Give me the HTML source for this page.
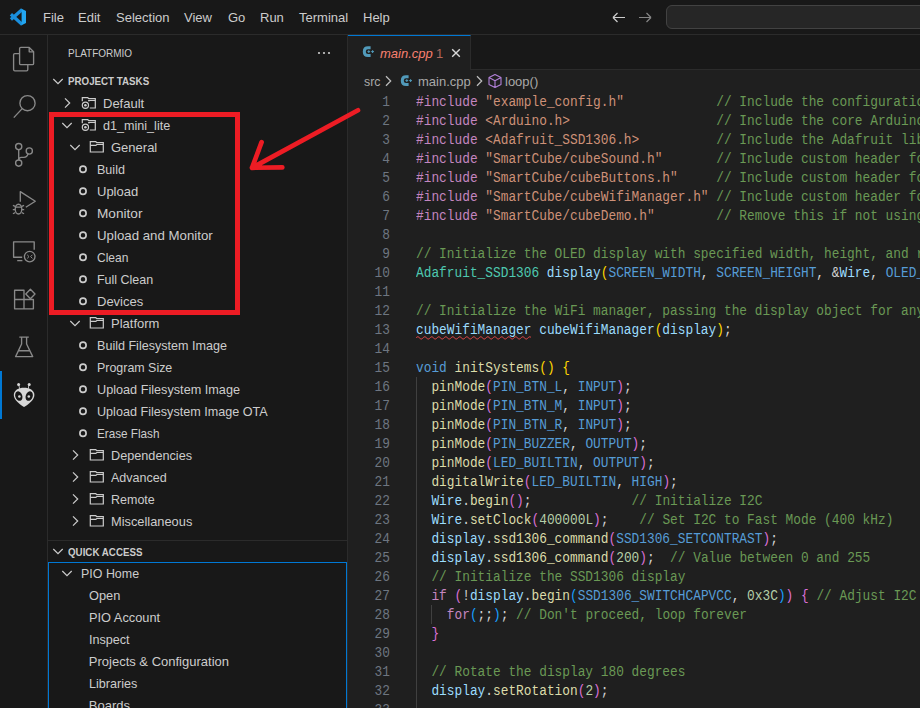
<!DOCTYPE html>
<html><head><meta charset="utf-8">
<style>
*{margin:0;padding:0;box-sizing:border-box}
html,body{width:920px;height:708px;overflow:hidden;background:#181818}
body{position:relative;font-family:"Liberation Sans",sans-serif;color:#CCCCCC}
.a{position:absolute}
.t{position:absolute;transform-origin:0 0;white-space:pre;font-size:13px;line-height:22px;height:22px;margin-top:1px}
#title{left:0;top:0;width:920px;height:35px;background:#181818;border-bottom:1px solid #2B2B2B}
.menu{position:absolute;top:0;line-height:35px;font-size:13px;color:#CCCCCC;white-space:pre}
#act{left:0;top:35px;width:48px;height:673px;background:#181818;border-right:1px solid #2B2B2B}
#side{left:48px;top:35px;width:300px;height:673px;background:#181818;border-right:1px solid #2B2B2B}
#editor{left:348px;top:35px;width:572px;height:673px;background:#1F1F1F}
#tabs{left:348px;top:35px;width:572px;height:35px;background:#181818;border-bottom:1px solid #2B2B2B}
#tab{left:348px;top:35px;width:123px;height:35px;background:#1F1F1F;border-top:1px solid #0078D4;border-right:1px solid #2B2B2B}
.code{position:absolute;left:416px;white-space:pre;font-family:"Liberation Mono",monospace;font-size:14px;line-height:19px;height:19px;color:#D4D4D4;transform-origin:0 0;transform:scaleX(0.9163)}
.ln{position:absolute;left:350px;width:41px;text-align:right;white-space:pre;font-family:"Liberation Mono",monospace;font-size:14px;line-height:19px;height:19px;color:#6E7681;transform-origin:100% 0;transform:scaleX(0.9163)}
.k{color:#C586C0}.s{color:#CE9178}.c{color:#6A9955}.ty{color:#4EC9B0}.v{color:#9CDCFE}.f{color:#DCDCAA}
.m{color:#569CD6}.n{color:#B5CEA8}.b1{color:#FFD700}.b2{color:#DA70D6}.b3{color:#179FFF}.kw{color:#569CD6}
.sq{text-decoration:underline wavy #F14C4C;text-decoration-thickness:1px;text-underline-offset:3px}
</style></head><body>

<!-- Title bar -->
<div id="title" class="a"></div>
<svg class="a" style="left:6px;top:5px" width="24" height="24" viewBox="0 0 24 24">
  <path d="M4.9 9.3 L16.2 19.4 M4.9 14.5 L16.2 4.4" stroke="#1A8FDD" stroke-width="3.3" stroke-linecap="butt" fill="none"/>
  <path d="M15.6 3.8 L20 6 V18 L15.6 20.2 Z" fill="#22A6F1"/>
</svg>
<div class="menu" style="left:43px">File</div>
<div class="menu" style="left:78px">Edit</div>
<div class="menu" style="left:116px">Selection</div>
<div class="menu" style="left:184px">View</div>
<div class="menu" style="left:228px">Go</div>
<div class="menu" style="left:260px">Run</div>
<div class="menu" style="left:299px">Terminal</div>
<div class="menu" style="left:363px">Help</div>
<svg class="a" style="left:610px;top:9px" width="48" height="18" viewBox="0 0 48 18">
  <path d="M3 8.5 H15 M3 8.5 L7.5 4 M3 8.5 L7.5 13" stroke="#CCCCCC" stroke-width="1.2" fill="none"/>
  <path d="M29 8.5 H41 M41 8.5 L36.5 4 M41 8.5 L36.5 13" stroke="#868686" stroke-width="1.2" fill="none"/>
</svg>
<div class="a" style="left:666px;top:5px;width:300px;height:24px;background:#262626;border:1px solid #424242;border-radius:6px"></div>

<!-- Activity bar -->
<div id="act" class="a"></div>
<div id="side" class="a"></div>
<div id="editor" class="a"></div>
<div id="tabs" class="a"></div>
<div id="tab" class="a"></div>


<svg class="a" style="left:0;top:0" width="48" height="708" viewBox="0 0 48 708">
 <g stroke="#898989" stroke-width="1.35" fill="none" stroke-linejoin="round">
  <!-- explorer -->
  <path d="M19.3 53.6 H14.8 Q13.6 53.6 13.6 54.8 V69.6 Q13.6 70.8 14.8 70.8 H26.6 Q27.8 70.8 27.8 69.6 V64.8"/>
  <path d="M20.8 47.4 H29.2 L33.6 51.8 V63.4 Q33.6 64.6 32.4 64.6 H20.8 Q19.6 64.6 19.6 63.4 V48.6 Q19.6 47.4 20.8 47.4 Z"/>
  <path d="M29.2 47.4 V51.8 H33.6"/>
  <!-- search -->
  <circle cx="27.5" cy="103.2" r="7.6"/>
  <path d="M22.2 108.6 L13.8 117.6"/>
  <!-- scm -->
  <circle cx="18.7" cy="146.6" r="3.1"/>
  <circle cx="18.7" cy="163.1" r="3.1"/>
  <circle cx="29.3" cy="151" r="3.1"/>
  <path d="M18.7 149.7 V160"/>
  <path d="M28.1 153.9 Q27 157.3 24 157.3 H21.4 Q18.7 157.3 18.7 160"/>
  <!-- debug -->
  <path d="M20.3 201.8 V191.6 L35.3 201.2 L25.8 207.2"/>
  <ellipse cx="18.5" cy="209.1" rx="3.3" ry="4.9"/>
  <path d="M12.9 205.4 L15.2 206.4 M12.8 209.6 H15.2 M12.9 213.7 L15.2 212.6 M24.1 205.4 L21.8 206.4 M24.2 209.6 H21.8 M24.1 213.7 L21.8 212.6 M15.4 207.1 H21.6" stroke-width="1.2"/>
  <!-- remote -->
  <path d="M22.2 257.2 H13.6 V241.8 H34.2 V249.8"/>
  <path d="M17.2 260.6 H22.4"/>
  <circle cx="29.7" cy="256.6" r="5.3"/>
  <path d="M27.2 254.8 L29 256.6 L27.2 258.4 M32.4 254.8 L30.6 256.6 L32.4 258.4" stroke-width="1"/>
  <!-- extensions -->
  <path d="M14.6 290.2 H24 V308.8 H14.6 Z M14.6 299.5 H33.4 V308.8 H24"/>
  <path d="M30.4 289.3 L35 294 L30.4 298.7 L25.8 294 Z"/>
  <!-- testing -->
  <path d="M19.3 337.1 H28.8 M21.6 337.1 V344 L15.6 356.6 H32.7 L26.6 344 V337.1 M18.5 350.7 H29.8"/>
 </g>
 <!-- platformio -->
 <rect x="0" y="371" width="2" height="48" fill="#0078D4"/>
 <g fill="#D7D7D7">
  <circle cx="18.6" cy="384.5" r="1.5"/><circle cx="29.2" cy="384.5" r="1.5"/>
  <path d="M18.3 384.6 L19.1 384.4 L20 388.8 L19.2 389 Z M29.5 384.6 L28.7 384.4 L27.8 388.8 L28.6 389 Z"/>
  <path d="M13.8 395 C13.8 390.2 18.4 387.7 24 387.7 C29.6 387.7 34.4 390.2 34.4 395 C34.4 399.8 28.6 404.4 24 407 C19.6 404.4 13.8 399.8 13.8 395 Z"/>
 </g>
 <g fill="#181818">
  <ellipse cx="18.8" cy="396.1" rx="3.5" ry="4.9" transform="rotate(-20 18.8 396.1)"/>
  <ellipse cx="29.2" cy="396.1" rx="3.5" ry="4.9" transform="rotate(20 29.2 396.1)"/>
 </g>
 <circle cx="19.4" cy="396.5" r="1.3" fill="#D7D7D7"/><circle cx="28.8" cy="396.5" r="1.3" fill="#D7D7D7"/>
</svg>


<!-- Sidebar -->
<div class="a" style="left:68px;top:36px;line-height:35px;font-size:11px;white-space:pre;transform-origin:0 0;transform:scaleX(0.907)">PLATFORMIO</div>
<div class="a" style="left:68px;top:70px;line-height:22px;font-size:11px;font-weight:bold;white-space:pre;transform-origin:0 0;transform:scaleX(0.887)">PROJECT TASKS</div>
<div class="a" style="left:48px;top:540px;width:299px;height:1px;background:#2B2B2B"></div>
<div class="a" style="left:68px;top:541px;line-height:22px;font-size:11px;font-weight:bold;white-space:pre;transform-origin:0 0;transform:scaleX(0.887)">QUICK ACCESS</div>
<div class="a" style="left:48px;top:562px;width:299px;height:160px;border:1px solid #0078D4"></div>
<div class="t" style="left:103px;top:92px">Default</div>
<div class="t" style="left:103px;top:114px;transform:scaleX(0.969)">d1_mini_lite</div>
<div class="t" style="left:111px;top:136px">General</div>
<div class="t" style="left:97px;top:158px;transform:scaleX(0.965)">Build</div>
<div class="t" style="left:97px;top:180px">Upload</div>
<div class="t" style="left:97px;top:202px;transform:scaleX(1.048)">Monitor</div>
<div class="t" style="left:97px;top:224px;transform:scaleX(1.020)">Upload and Monitor</div>
<div class="t" style="left:97px;top:246px;transform:scaleX(0.924)">Clean</div>
<div class="t" style="left:97px;top:268px;transform:scaleX(0.959)">Full Clean</div>
<div class="t" style="left:97px;top:290px">Devices</div>
<div class="t" style="left:111px;top:312px">Platform</div>
<div class="t" style="left:97px;top:334px;transform:scaleX(0.967)">Build Filesystem Image</div>
<div class="t" style="left:97px;top:356px;transform:scaleX(0.956)">Program Size</div>
<div class="t" style="left:97px;top:378px;transform:scaleX(0.975)">Upload Filesystem Image</div>
<div class="t" style="left:97px;top:400px;transform:scaleX(0.970)">Upload Filesystem Image OTA</div>
<div class="t" style="left:97px;top:422px;transform:scaleX(0.901)">Erase Flash</div>
<div class="t" style="left:111px;top:444px;transform:scaleX(0.975)">Dependencies</div>
<div class="t" style="left:111px;top:466px;transform:scaleX(0.963)">Advanced</div>
<div class="t" style="left:111px;top:488px;transform:scaleX(0.961)">Remote</div>
<div class="t" style="left:111px;top:510px;transform:scaleX(0.987)">Miscellaneous</div>
<div class="t" style="left:81.2px;top:562px;transform:scaleX(0.957)">PIO Home</div>
<div class="t" style="left:88.8px;top:584px;transform:scaleX(0.984)">Open</div>
<div class="t" style="left:88.8px;top:606px;transform:scaleX(0.983)">PIO Account</div>
<div class="t" style="left:88.8px;top:628px;transform:scaleX(0.969)">Inspect</div>
<div class="t" style="left:88.8px;top:650px">Projects &amp; Configuration</div>
<div class="t" style="left:88.8px;top:672px;transform:scaleX(0.969)">Libraries</div>
<div class="t" style="left:88.8px;top:694px">Boards</div>
<svg class="a" style="left:0;top:0" width="348" height="708" viewBox="0 0 348 708"><g stroke="#CCCCCC" stroke-width="1.2" fill="none"><path d="M65 98.3 L69.7 103 L65 107.7"/><path d="M82.3 101.2 V97.7 H87.8 L88.8 98.6 H95.3 V108 H89.8"/><path d="M89.3 101.4 L88.8 100.5 H95.3"/><circle cx="85.39999999999999" cy="105.2" r="3.1"/><circle cx="85.39999999999999" cy="105.2" r="1.3" fill="#CCCCCC" stroke="none"/><path d="M62.3 123 L67 127.7 L71.7 123"/><path d="M82.3 123.2 V119.7 H87.8 L88.8 120.6 H95.3 V130 H89.8"/><path d="M89.3 123.4 L88.8 122.5 H95.3"/><circle cx="85.39999999999999" cy="127.2" r="3.1"/><circle cx="85.39999999999999" cy="127.2" r="1.3" fill="#CCCCCC" stroke="none"/><path d="M70.3 145 L75 149.7 L79.7 145"/><path d="M90.3 152 V141.7 H95.8 L96.8 142.6 H103.3 V152 Z"/><path d="M90.3 145.4 H95.8 L96.8 144.5 H103.3"/><circle cx="83" cy="169.2" r="3.1" stroke-width="1.7"/><circle cx="83" cy="191.2" r="3.1" stroke-width="1.7"/><circle cx="83" cy="213.2" r="3.1" stroke-width="1.7"/><circle cx="83" cy="235.2" r="3.1" stroke-width="1.7"/><circle cx="83" cy="257.2" r="3.1" stroke-width="1.7"/><circle cx="83" cy="279.2" r="3.1" stroke-width="1.7"/><circle cx="83" cy="301.2" r="3.1" stroke-width="1.7"/><path d="M70.3 321 L75 325.7 L79.7 321"/><path d="M90.3 328 V317.7 H95.8 L96.8 318.6 H103.3 V328 Z"/><path d="M90.3 321.4 H95.8 L96.8 320.5 H103.3"/><circle cx="83" cy="345.2" r="3.1" stroke-width="1.7"/><circle cx="83" cy="367.2" r="3.1" stroke-width="1.7"/><circle cx="83" cy="389.2" r="3.1" stroke-width="1.7"/><circle cx="83" cy="411.2" r="3.1" stroke-width="1.7"/><circle cx="83" cy="433.2" r="3.1" stroke-width="1.7"/><path d="M73 450.3 L77.7 455 L73 459.7"/><path d="M90.3 460 V449.7 H95.8 L96.8 450.6 H103.3 V460 Z"/><path d="M90.3 453.4 H95.8 L96.8 452.5 H103.3"/><path d="M73 472.3 L77.7 477 L73 481.7"/><path d="M90.3 482 V471.7 H95.8 L96.8 472.6 H103.3 V482 Z"/><path d="M90.3 475.4 H95.8 L96.8 474.5 H103.3"/><path d="M73 494.3 L77.7 499 L73 503.7"/><path d="M90.3 504 V493.7 H95.8 L96.8 494.6 H103.3 V504 Z"/><path d="M90.3 497.4 H95.8 L96.8 496.5 H103.3"/><path d="M73 516.3 L77.7 521 L73 525.7"/><path d="M90.3 526 V515.7 H95.8 L96.8 516.6 H103.3 V526 Z"/><path d="M90.3 519.4 H95.8 L96.8 518.5 H103.3"/><path d="M62.3 571 L67 575.7 L71.7 571"/><path d="M53.3 79 L58 83.7 L62.7 79"/><path d="M53.3 549 L58 553.7 L62.7 549"/></g><g fill="#CCCCCC"><circle cx="319" cy="53" r="1.1"/><circle cx="324" cy="53" r="1.1"/><circle cx="329" cy="53" r="1.1"/></g></svg>

<!-- Editor -->
<svg class="a" style="left:358px;top:42px" width="22" height="20" viewBox="0 0 22 20">
 <path d="M12.6 5.7 H10 Q6.3 5.7 6.3 9.65 Q6.3 13.6 10 13.6 H12.6" stroke="#519ABA" stroke-width="3" fill="none"/>
 <path d="M9.4 9.6 H12.2 M10.8 8.2 V11 M13.2 9.6 H16 M14.6 8.2 V11" stroke="#519ABA" stroke-width="1" fill="none"/>
</svg>
<div class="a" style="left:380px;top:36px;line-height:35px;font-size:13px;font-style:italic;color:#F88070;white-space:pre">main.cpp</div>
<div class="a" style="left:436px;top:36px;line-height:35px;font-size:13px;color:#B0675B;white-space:pre">1</div>
<svg class="a" style="left:450px;top:47px" width="12" height="12" viewBox="0 0 12 12"><path d="M2.2 2.2 L9.8 9.8 M9.8 2.2 L2.2 9.8" stroke="#D8D8D8" stroke-width="1.4"/></svg>
<!-- breadcrumbs -->
<div class="a" style="left:364px;top:71px;line-height:22px;font-size:13px;color:#A9A9A9;white-space:pre;transform-origin:0 0;transform:scaleX(0.95)">src</div>
<svg class="a" style="left:380px;top:73px" width="16" height="16" viewBox="0 0 16 16"><path d="M6 3.3 L10.7 8 L6 12.7" stroke="#BDBDBD" stroke-width="1.25" fill="none"/></svg>
<svg class="a" style="left:396px;top:71px" width="22" height="20" viewBox="0 0 22 20">
 <path d="M12.6 5.7 H10 Q6.3 5.7 6.3 9.65 Q6.3 13.6 10 13.6 H12.6" stroke="#519ABA" stroke-width="3" fill="none"/>
 <path d="M9.4 9.6 H12.2 M10.8 8.2 V11 M13.2 9.6 H16 M14.6 8.2 V11" stroke="#519ABA" stroke-width="1" fill="none"/>
</svg>
<div class="a" style="left:418px;top:71px;line-height:22px;font-size:13px;color:#A9A9A9;white-space:pre">main.cpp</div>
<svg class="a" style="left:471px;top:73px" width="16" height="16" viewBox="0 0 16 16"><path d="M6 3.3 L10.7 8 L6 12.7" stroke="#BDBDBD" stroke-width="1.25" fill="none"/></svg>
<svg class="a" style="left:487px;top:73px" width="16" height="16" viewBox="0 0 16 16">
 <path d="M8 1.5 L14 4.6 V11.4 L8 14.5 L2 11.4 V4.6 Z M2 4.6 L8 7.8 L14 4.6 M8 7.8 V14.5" stroke="#B180D7" stroke-width="1.1" fill="none" stroke-linejoin="round"/>
</svg>
<div class="a" style="left:505px;top:71px;line-height:22px;font-size:13px;color:#A9A9A9;white-space:pre">loop()</div>
<!-- indent guides -->
<div class="a" style="left:416px;top:377px;width:1px;height:331px;background:#404040"></div>
<div class="a" style="left:431px;top:605px;width:1px;height:19px;background:#404040"></div>
<div class="a" style="left:348px;top:92px;width:572px;height:616px;overflow:hidden">
<div class="ln" style="top:1px;left:0.7px">1</div>
<div class="code" style="top:1px;left:68px"><span class="k">#include</span> <span class="s">"example_config.h"</span>            <span class="c">// Include the configuration file</span></div>
<div class="ln" style="top:20px;left:0.7px">2</div>
<div class="code" style="top:20px;left:68px"><span class="k">#include</span> <span class="s">&lt;Arduino.h&gt;</span>                   <span class="c">// Include the core Arduino library</span></div>
<div class="ln" style="top:39px;left:0.7px">3</div>
<div class="code" style="top:39px;left:68px"><span class="k">#include</span> <span class="s">&lt;Adafruit_SSD1306.h&gt;</span>          <span class="c">// Include the Adafruit library for OLED</span></div>
<div class="ln" style="top:58px;left:0.7px">4</div>
<div class="code" style="top:58px;left:68px"><span class="k">#include</span> <span class="s">"SmartCube/cubeSound.h"</span>       <span class="c">// Include custom header for sound</span></div>
<div class="ln" style="top:77px;left:0.7px">5</div>
<div class="code" style="top:77px;left:68px"><span class="k">#include</span> <span class="s">"SmartCube/cubeButtons.h"</span>     <span class="c">// Include custom header for buttons</span></div>
<div class="ln" style="top:96px;left:0.7px">6</div>
<div class="code" style="top:96px;left:68px"><span class="k">#include</span> <span class="s">"SmartCube/cubeWifiManager.h"</span> <span class="c">// Include custom header for WiFi</span></div>
<div class="ln" style="top:115px;left:0.7px">7</div>
<div class="code" style="top:115px;left:68px"><span class="k">#include</span> <span class="s">"SmartCube/cubeDemo.h"</span>        <span class="c">// Remove this if not using demo</span></div>
<div class="ln" style="top:134px;left:0.7px">8</div>
<div class="ln" style="top:153px;left:0.7px">9</div>
<div class="code" style="top:153px;left:68px"><span class="c">// Initialize the OLED display with specified width, height, and reset pin</span></div>
<div class="ln" style="top:172px;left:0.7px">10</div>
<div class="code" style="top:172px;left:68px"><span class="ty">Adafruit_SSD1306</span> <span class="v">display</span><span class="b1">(</span><span class="m">SCREEN_WIDTH</span>, <span class="m">SCREEN_HEIGHT</span>, &amp;<span class="v">Wire</span>, <span class="m">OLED_RESET</span><span class="b1">)</span>;</div>
<div class="ln" style="top:191px;left:0.7px">11</div>
<div class="ln" style="top:210px;left:0.7px">12</div>
<div class="code" style="top:210px;left:68px"><span class="c">// Initialize the WiFi manager, passing the display object for any messages</span></div>
<div class="ln" style="top:229px;left:0.7px">13</div>
<div class="code" style="top:229px;left:68px"><span class="v">cubeWifiManager</span> <span class="v">cubeWifiManager</span><span class="b1">(</span><span class="v">display</span><span class="b1">)</span>;</div>
<div class="ln" style="top:248px;left:0.7px">14</div>
<div class="ln" style="top:267px;left:0.7px">15</div>
<div class="code" style="top:267px;left:68px"><span class="kw">void</span> <span class="f">initSystems</span><span class="b1">()</span> <span class="b1">{</span></div>
<div class="ln" style="top:286px;left:0.7px">16</div>
<div class="code" style="top:286px;left:68px">  <span class="f">pinMode</span><span class="b2">(</span><span class="m">PIN_BTN_L</span>, <span class="m">INPUT</span><span class="b2">)</span>;</div>
<div class="ln" style="top:305px;left:0.7px">17</div>
<div class="code" style="top:305px;left:68px">  <span class="f">pinMode</span><span class="b2">(</span><span class="m">PIN_BTN_M</span>, <span class="m">INPUT</span><span class="b2">)</span>;</div>
<div class="ln" style="top:324px;left:0.7px">18</div>
<div class="code" style="top:324px;left:68px">  <span class="f">pinMode</span><span class="b2">(</span><span class="m">PIN_BTN_R</span>, <span class="m">INPUT</span><span class="b2">)</span>;</div>
<div class="ln" style="top:343px;left:0.7px">19</div>
<div class="code" style="top:343px;left:68px">  <span class="f">pinMode</span><span class="b2">(</span><span class="m">PIN_BUZZER</span>, <span class="m">OUTPUT</span><span class="b2">)</span>;</div>
<div class="ln" style="top:362px;left:0.7px">20</div>
<div class="code" style="top:362px;left:68px">  <span class="f">pinMode</span><span class="b2">(</span><span class="m">LED_BUILTIN</span>, <span class="m">OUTPUT</span><span class="b2">)</span>;</div>
<div class="ln" style="top:381px;left:0.7px">21</div>
<div class="code" style="top:381px;left:68px">  <span class="f">digitalWrite</span><span class="b2">(</span><span class="m">LED_BUILTIN</span>, <span class="m">HIGH</span><span class="b2">)</span>;</div>
<div class="ln" style="top:400px;left:0.7px">22</div>
<div class="code" style="top:400px;left:68px">  <span class="v">Wire</span>.<span class="f">begin</span><span class="b2">()</span>;             <span class="c">// Initialize I2C</span></div>
<div class="ln" style="top:419px;left:0.7px">23</div>
<div class="code" style="top:419px;left:68px">  <span class="v">Wire</span>.<span class="f">setClock</span><span class="b2">(</span><span class="n">400000L</span><span class="b2">)</span>;    <span class="c">// Set I2C to Fast Mode (400 kHz)</span></div>
<div class="ln" style="top:438px;left:0.7px">24</div>
<div class="code" style="top:438px;left:68px">  <span class="v">display</span>.<span class="f">ssd1306_command</span><span class="b2">(</span><span class="m">SSD1306_SETCONTRAST</span><span class="b2">)</span>;</div>
<div class="ln" style="top:457px;left:0.7px">25</div>
<div class="code" style="top:457px;left:68px">  <span class="v">display</span>.<span class="f">ssd1306_command</span><span class="b2">(</span><span class="n">200</span><span class="b2">)</span>;  <span class="c">// Value between 0 and 255</span></div>
<div class="ln" style="top:476px;left:0.7px">26</div>
<div class="code" style="top:476px;left:68px">  <span class="c">// Initialize the SSD1306 display</span></div>
<div class="ln" style="top:495px;left:0.7px">27</div>
<div class="code" style="top:495px;left:68px">  <span class="k">if</span> <span class="b2">(</span>!<span class="v">display</span>.<span class="f">begin</span><span class="b3">(</span><span class="m">SSD1306_SWITCHCAPVCC</span>, <span class="n">0x3C</span><span class="b3">)</span><span class="b2">)</span> <span class="b2">{</span> <span class="c">// Adjust I2C address if needed</span></div>
<div class="ln" style="top:514px;left:0.7px">28</div>
<div class="code" style="top:514px;left:68px">    <span class="k">for</span><span class="b3">(</span>;;<span class="b3">)</span>; <span class="c">// Don't proceed, loop forever</span></div>
<div class="ln" style="top:533px;left:0.7px">29</div>
<div class="code" style="top:533px;left:68px">  <span class="b2">}</span></div>
<div class="ln" style="top:552px;left:0.7px">30</div>
<div class="ln" style="top:571px;left:0.7px">31</div>
<div class="code" style="top:571px;left:68px">  <span class="c">// Rotate the display 180 degrees</span></div>
<div class="ln" style="top:590px;left:0.7px">32</div>
<div class="code" style="top:590px;left:68px">  <span class="v">display</span>.<span class="f">setRotation</span><span class="b2">(</span><span class="n">2</span><span class="b2">)</span>;</div>
<div class="ln" style="top:609px;left:0.7px">33</div>
</div>

<svg class="a" style="left:0;top:0" width="920" height="708"><path d="M416.00 337.90 L416.50 337.42 L417.00 337.04 L417.50 336.83 L418.00 336.83 L418.50 337.04 L419.00 337.42 L419.50 337.90 L420.00 338.38 L420.50 338.76 L421.00 338.97 L421.50 338.97 L422.00 338.76 L422.50 338.38 L423.00 337.90 L423.50 337.42 L424.00 337.04 L424.50 336.83 L425.00 336.83 L425.50 337.04 L426.00 337.42 L426.50 337.90 L427.00 338.38 L427.50 338.76 L428.00 338.97 L428.50 338.97 L429.00 338.76 L429.50 338.38 L430.00 337.90 L430.50 337.42 L431.00 337.04 L431.50 336.83 L432.00 336.83 L432.50 337.04 L433.00 337.42 L433.50 337.90 L434.00 338.38 L434.50 338.76 L435.00 338.97 L435.50 338.97 L436.00 338.76 L436.50 338.38 L437.00 337.90 L437.50 337.42 L438.00 337.04 L438.50 336.83 L439.00 336.83 L439.50 337.04 L440.00 337.42 L440.50 337.90 L441.00 338.38 L441.50 338.76 L442.00 338.97 L442.50 338.97 L443.00 338.76 L443.50 338.38 L444.00 337.90 L444.50 337.42 L445.00 337.04 L445.50 336.83 L446.00 336.83 L446.50 337.04 L447.00 337.42 L447.50 337.90 L448.00 338.38 L448.50 338.76 L449.00 338.97 L449.50 338.97 L450.00 338.76 L450.50 338.38 L451.00 337.90 L451.50 337.42 L452.00 337.04 L452.50 336.83 L453.00 336.83 L453.50 337.04 L454.00 337.42 L454.50 337.90 L455.00 338.38 L455.50 338.76 L456.00 338.97 L456.50 338.97 L457.00 338.76 L457.50 338.38 L458.00 337.90 L458.50 337.42 L459.00 337.04 L459.50 336.83 L460.00 336.83 L460.50 337.04 L461.00 337.42 L461.50 337.90 L462.00 338.38 L462.50 338.76 L463.00 338.97 L463.50 338.97 L464.00 338.76 L464.50 338.38 L465.00 337.90 L465.50 337.42 L466.00 337.04 L466.50 336.83 L467.00 336.83 L467.50 337.04 L468.00 337.42 L468.50 337.90 L469.00 338.38 L469.50 338.76 L470.00 338.97 L470.50 338.97 L471.00 338.76 L471.50 338.38 L472.00 337.90 L472.50 337.42 L473.00 337.04 L473.50 336.83 L474.00 336.83 L474.50 337.04 L475.00 337.42 L475.50 337.90 L476.00 338.38 L476.50 338.76 L477.00 338.97 L477.50 338.97 L478.00 338.76 L478.50 338.38 L479.00 337.90 L479.50 337.42 L480.00 337.04 L480.50 336.83 L481.00 336.83 L481.50 337.04 L482.00 337.42 L482.50 337.90 L483.00 338.38 L483.50 338.76 L484.00 338.97 L484.50 338.97 L485.00 338.76 L485.50 338.38 L486.00 337.90 L486.50 337.42 L487.00 337.04 L487.50 336.83 L488.00 336.83 L488.50 337.04 L489.00 337.42 L489.50 337.90 L490.00 338.38 L490.50 338.76 L491.00 338.97 L491.50 338.97 L492.00 338.76 L492.50 338.38 L493.00 337.90 L493.50 337.42 L494.00 337.04 L494.50 336.83 L495.00 336.83 L495.50 337.04 L496.00 337.42 L496.50 337.90 L497.00 338.38 L497.50 338.76 L498.00 338.97 L498.50 338.97 L499.00 338.76 L499.50 338.38 L500.00 337.90 L500.50 337.42 L501.00 337.04 L501.50 336.83 L502.00 336.83 L502.50 337.04 L503.00 337.42 L503.50 337.90 L504.00 338.38 L504.50 338.76 L505.00 338.97 L505.50 338.97 L506.00 338.76 L506.50 338.38 L507.00 337.90 L507.50 337.42 L508.00 337.04 L508.50 336.83 L509.00 336.83 L509.50 337.04 L510.00 337.42 L510.50 337.90 L511.00 338.38 L511.50 338.76 L512.00 338.97 L512.50 338.97 L513.00 338.76 L513.50 338.38 L514.00 337.90 L514.50 337.42 L515.00 337.04 L515.50 336.83 L516.00 336.83 L516.50 337.04 L517.00 337.42 L517.50 337.90 L518.00 338.38 L518.50 338.76 L519.00 338.97 L519.50 338.97 L520.00 338.76 L520.50 338.38 L521.00 337.90 L521.50 337.42 L522.00 337.04 L522.50 336.83 L523.00 336.83 L523.50 337.04 L524.00 337.42 L524.50 337.90 L525.00 338.38 L525.50 338.76 L526.00 338.97 L526.50 338.97 L527.00 338.76 L527.50 338.38 L528.00 337.90 L528.50 337.42 L529.00 337.04 L529.50 336.83 L530.00 336.83 L530.50 337.04 L531.00 337.42" stroke="#F14C4C" stroke-width="1" fill="none"/></svg>
<!-- Annotation -->
<div class="a" style="left:49px;top:112px;width:191px;height:203px;border:5px solid #ED1C24"></div>
<svg class="a" style="left:0;top:0" width="920" height="708" viewBox="0 0 920 708">
 <path d="M358 110.3 L252 167.8 M261.6 142.2 L252 167.8 L282.3 167.4" stroke="#ED1C24" stroke-width="4.7" stroke-linecap="round" stroke-linejoin="round" fill="none"/>
</svg>
</body></html>
